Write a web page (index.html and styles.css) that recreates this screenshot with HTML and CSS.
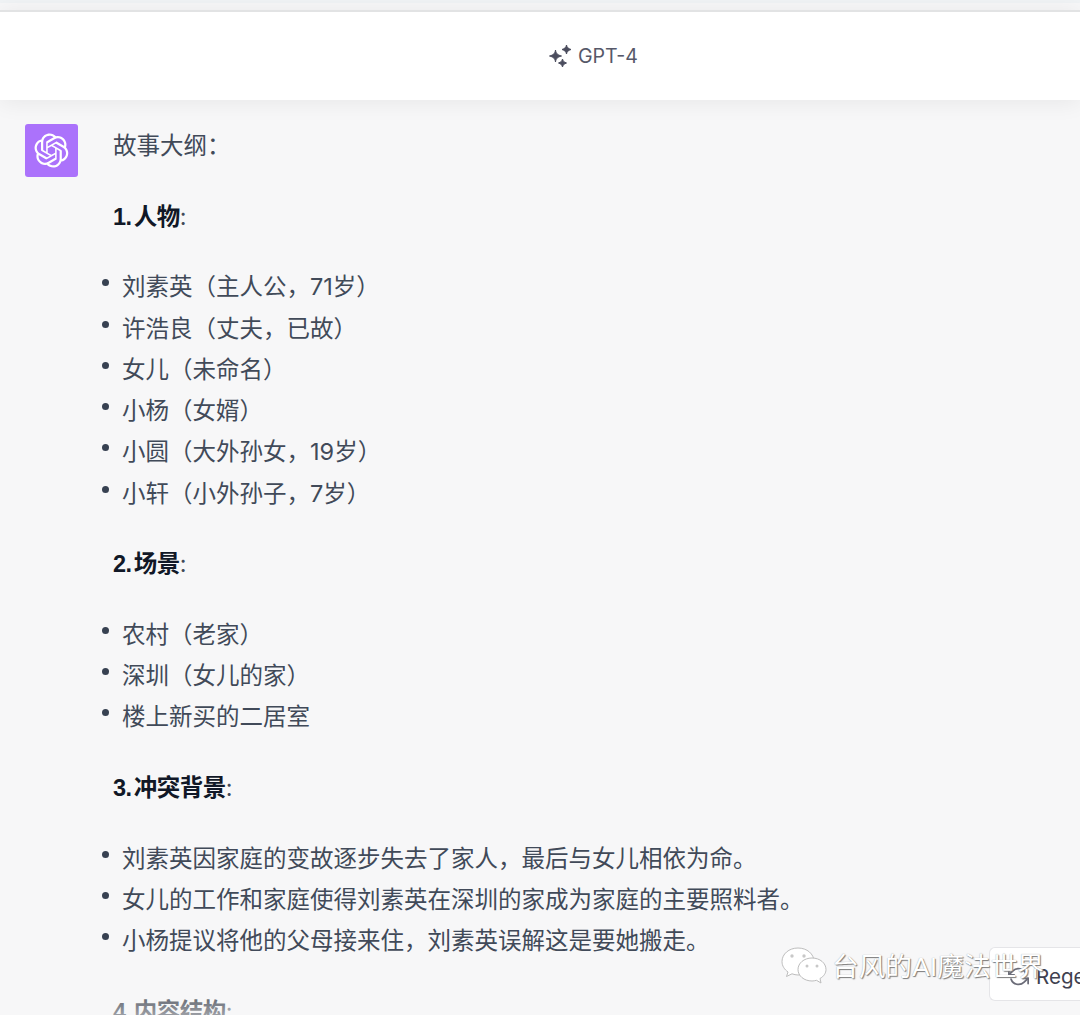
FILE: index.html
```html
<!DOCTYPE html>
<html lang="zh-CN">
<head>
<meta charset="utf-8">
<title>GPT-4</title>
<link rel="stylesheet" href="styles.css">
</head>
<body>
<div class="strip"></div>
<header class="header">
  <svg class="sparkle" viewBox="0 0 24 24" aria-hidden="true">
    <path d="M6.500 6 C7 9.500 8.500 11 12.500 12 C8.500 13 7 14.500 6.500 18 C6 14.500 4.500 13 0.500 12 C4.500 11 6 9.500 6.500 6 Z" stroke="#4b4d5e" stroke-width="1" stroke-linejoin="round"/>
    <path d="M17.500 1 C18 3.400 19 4.500 22 5.500 C19 6.500 18 7.600 17.500 10 C17 7.600 16 6.500 13 5.500 C16 4.500 17 3.400 17.500 1 Z" stroke="#4b4d5e" stroke-width="1" stroke-linejoin="round"/>
    <path d="M13.500 15 C14 17 14.800 18 17.500 19 C14.800 20 14 21 13.500 23 C13 21 12.200 20 9.500 19 C12.200 18 13 17 13.500 15 Z" stroke="#4b4d5e" stroke-width="1" stroke-linejoin="round"/>
  </svg>
  <span>GPT-4</span>
</header>
<main class="message">
  <div class="avatar">
    <svg viewBox="0 0 41 41" aria-hidden="true"><path d="M37.5324 16.8707C37.9808 15.5241 38.1363 14.0974 37.9886 12.6859C37.8409 11.2744 37.3934 9.91076 36.676 8.68622C35.6126 6.83404 33.9882 5.3676 32.0373 4.4985C30.0864 3.62941 27.9098 3.40259 25.8215 3.85078C24.8796 2.7893 23.7219 1.94125 22.4257 1.36341C21.1295 0.785575 19.7249 0.491269 18.3058 0.500197C16.1708 0.495044 14.0893 1.16803 12.3614 2.42214C10.6335 3.67624 9.34853 5.44666 8.6917 7.47815C7.30085 7.76286 5.98686 8.3414 4.8377 9.17505C3.68854 10.0087 2.73073 11.0782 2.02839 12.312C0.956464 14.1591 0.498905 16.2988 0.721698 18.4228C0.944492 20.5467 1.83612 22.5449 3.268 24.1293C2.81966 25.4759 2.66413 26.9026 2.81182 28.3141C2.95951 29.7256 3.40701 31.0892 4.12437 32.3138C5.18791 34.1659 6.8123 35.6322 8.76321 36.5013C10.7141 37.3704 12.8907 37.5973 14.9789 37.1492C15.9208 38.2107 17.0786 39.0587 18.3747 39.6366C19.6709 40.2144 21.0755 40.5087 22.4946 40.4998C24.6307 40.5054 26.7133 39.8321 28.4418 38.5772C30.1704 37.3223 31.4556 35.5506 32.1119 33.5179C33.5027 33.2332 34.8167 32.6547 35.9659 31.821C37.115 30.9874 38.0728 29.9178 38.7752 28.684C39.8458 26.8371 40.3023 24.6979 40.0789 22.5748C39.8556 20.4517 38.9639 18.4544 37.5324 16.8707ZM22.4978 37.8849C20.7443 37.8874 19.0459 37.2733 17.6994 36.1501C17.7601 36.117 17.8666 36.0586 17.936 36.0161L25.9004 31.4156C26.1003 31.3019 26.2663 31.137 26.3813 30.9378C26.4964 30.7386 26.5563 30.5124 26.5549 30.2825V19.0542L29.9213 20.998C29.9389 21.0068 29.9541 21.0198 29.9656 21.0359C29.977 21.052 29.9842 21.0707 29.9867 21.0902V30.3889C29.9842 32.375 29.1946 34.2791 27.7909 35.6841C26.3872 37.0892 24.4838 37.8806 22.4978 37.8849ZM6.39227 31.0064C5.51397 29.4888 5.19742 27.7107 5.49804 25.9832C5.55718 26.0187 5.66048 26.0818 5.73461 26.1244L13.699 30.7248C13.8975 30.8408 14.1233 30.902 14.3532 30.902C14.583 30.902 14.8088 30.8408 15.0073 30.7248L24.731 25.1103V28.9979C24.7321 29.0177 24.7283 29.0376 24.7199 29.0556C24.7115 29.0736 24.6988 29.0893 24.6829 29.1012L16.6317 33.7497C14.9096 34.7416 12.8643 35.0097 10.9447 34.4954C9.02506 33.9811 7.38785 32.7263 6.39227 31.0064ZM4.29707 13.6194C5.17156 12.0998 6.55279 10.9364 8.19885 10.3327C8.19885 10.4013 8.19491 10.5228 8.19491 10.6071V19.808C8.19351 20.0378 8.25334 20.2638 8.36823 20.4629C8.48312 20.6619 8.64893 20.8267 8.84863 20.9404L18.5723 26.5542L15.206 28.4979C15.1894 28.5089 15.1703 28.5155 15.1505 28.5173C15.1307 28.5191 15.1107 28.516 15.0924 28.5082L7.04046 23.8557C5.32135 22.8601 4.06716 21.2235 3.55289 19.3046C3.03862 17.3858 3.30624 15.3413 4.29707 13.6194ZM31.955 20.0556L22.2312 14.4411L25.5976 12.4981C25.6142 12.4872 25.6333 12.4805 25.6531 12.4787C25.6729 12.4769 25.6928 12.4801 25.7111 12.4879L33.7631 17.1364C34.9967 17.849 36.0017 18.8982 36.6606 20.1613C37.3194 21.4244 37.6047 22.849 37.4832 24.2684C37.3617 25.6878 36.8382 27.0432 35.9743 28.1759C35.1103 29.3086 33.9415 30.1717 32.6047 30.6641C32.6047 30.5947 32.6047 30.4733 32.6047 30.3889V21.188C32.6066 20.9586 32.5474 20.7328 32.4332 20.5338C32.319 20.3348 32.154 20.1698 31.955 20.0556ZM35.3055 15.0128C35.2464 14.9765 35.1431 14.9142 35.069 14.8717L27.1045 10.2712C26.906 10.1554 26.6803 10.0943 26.4504 10.0943C26.2206 10.0943 25.9948 10.1554 25.7963 10.2712L16.0726 15.8858V11.9982C16.0715 11.9783 16.0753 11.9585 16.0837 11.9405C16.0921 11.9225 16.1048 11.9068 16.1207 11.8949L24.1719 7.25025C25.4053 6.53903 26.8158 6.19376 28.2383 6.25482C29.6608 6.31589 31.0364 6.78077 32.2044 7.59508C33.3723 8.40939 34.2842 9.53945 34.8334 10.8531C35.3826 12.1667 35.5464 13.6095 35.3055 15.0128ZM14.2424 21.9419L10.8752 19.9981C10.8576 19.9893 10.8423 19.9763 10.8309 19.9602C10.8195 19.9441 10.8122 19.9254 10.8098 19.9058V10.6071C10.8107 9.18295 11.2173 7.78848 11.9819 6.58696C12.7466 5.38544 13.8377 4.42659 15.1275 3.82264C16.4173 3.21869 17.8524 2.99464 19.2649 3.1767C20.6775 3.35876 22.0089 3.93941 23.1034 4.85067C23.0427 4.88379 22.937 4.94215 22.8668 4.98473L14.9024 9.58517C14.7025 9.69878 14.5366 9.86356 14.4215 10.0626C14.3065 10.2616 14.2466 10.4877 14.2479 10.7175L14.2424 21.9419ZM16.071 17.9991L20.4018 15.4978L24.7325 17.9975V22.9985L20.4018 25.4983L16.071 22.9985V17.9991Z"/></svg>
  </div>
  <div class="content">
    <p>故事大纲：</p>
    <p><strong>1. 人物</strong>:</p>
    <ul>
      <li>刘素英（主人公，71岁）</li>
      <li>许浩良（丈夫，已故）</li>
      <li>女儿（未命名）</li>
      <li>小杨（女婿）</li>
      <li>小圆（大外孙女，19岁）</li>
      <li>小轩（小外孙子，7岁）</li>
    </ul>
    <p><strong>2. 场景</strong>:</p>
    <ul>
      <li>农村（老家）</li>
      <li>深圳（女儿的家）</li>
      <li>楼上新买的二居室</li>
    </ul>
    <p><strong>3. 冲突背景</strong>:</p>
    <ul>
      <li>刘素英因家庭的变故逐步失去了家人，最后与女儿相依为命。</li>
      <li>女儿的工作和家庭使得刘素英在深圳的家成为家庭的主要照料者。</li>
      <li>小杨提议将他的父母接来住，刘素英误解这是要她搬走。</li>
    </ul>
    <p><strong>4. 内容结构</strong>:</p>
  </div>
</main>
<div class="fade"></div>
<button class="regen" type="button">
  <svg viewBox="0 0 24 24" aria-hidden="true"><path d="M1 4v6h6M23 20v-6h-6"/><path d="M20.500 9A9 9 0 0 0 5.600 5.600L1 10m22 4-4.600 4.400A9 9 0 0 1 3.500 15"/></svg>
  <span>Regenerate</span>
</button>
<div class="watermark">
  <svg viewBox="0 0 46 40" aria-hidden="true">
    <path class="bubble" d="M17 2C8 2 1 8 1 15.500C1 20 3.500 23.500 7 26L5.500 30.500L11 27.800C13 28.500 15 29 17 29C26 29 33 23 33 15.500C33 8 26 2 17 2Z"/>
    <circle class="eye" cx="11" cy="10" r="1.700"/>
    <circle class="eye" cx="23" cy="10" r="1.700"/>
    <path class="bubble" d="M31 12C23 12 17 17.200 17 23.500C17 29.800 23 35 31 35C32.500 35 34 34.700 35.500 34.300L40 37L39 32.500C42.700 30.500 45 27.200 45 23.500C45 17.200 39 12 31 12Z"/>
    <circle class="eye" cx="26" cy="20" r="1.500"/>
    <circle class="eye" cx="36" cy="20" r="1.500"/>
  </svg>
  <span class="mark-text">台风的AI魔法世界</span>
</div>
</body>
</html>
```
FILE: styles.css
```css
* { box-sizing: border-box; }
html, body { margin: 0; height: 100%; }
body {
  height: 1015px;
  overflow: hidden;
  position: relative;
  background: #f7f7f8;
  font-family: Inter, "Noto Sans CJK SC", sans-serif;
  color: #414a59;
}
.strip {
  height: 3px;
  background: #f0f3f5;
}
.header {
  position: relative;
  z-index: 2;
  height: 90px;
  margin-top: 7px;
  background: #fff;
  border-top: 2px solid #e2e3e4;
  box-shadow: 0 2px 22px rgba(0, 0, 0, 0.07);
  display: flex;
  align-items: center;
  justify-content: center;
  gap: 5px;
  padding: 0 0 0 107px;
  font-size: 19.600px;
  color: #565869;
}
.sparkle { width: 24px; height: 24px; fill: #4b4d5e; }
.message {
  display: flex;
  padding: 24px 0 0 25px;
}
.avatar {
  flex: none;
  width: 53px;
  height: 53px;
  background: #ab72fb;
  border-radius: 3px;
  display: flex;
  align-items: center;
  justify-content: center;
}
.avatar svg { width: 35px; height: 35px; fill: #fff; }
.content {
  margin-left: 35px;
  padding-top: 1px;
  font-size: 23.500px;
  line-height: 41.250px;
}
.content p { margin: 0 0 29.400px; white-space: nowrap; }
.content strong {
  font-family: "Liberation Sans", "Noto Sans CJK SC", sans-serif;
  font-weight: 700;
  line-height: 1;
  color: #111827;
  word-spacing: -4px;
  letter-spacing: -0.500px;
}
.content ul { margin: 0 0 29.400px -11px; padding: 0; list-style: none; }
.content li { display: flex; gap: 13px; white-space: nowrap; }
.content li::before {
  content: "";
  flex: none;
  width: 7px;
  height: 7px;
  margin-top: 13px;
  border-radius: 50%;
  background: #374151;
}
.fade {
  position: absolute;
  left: 0;
  right: 0;
  bottom: 0;
  height: 45px;
  background: linear-gradient(to bottom, rgba(247, 247, 248, 0), rgba(247, 247, 248, 0.6));
}
.regen {
  position: absolute;
  left: 989px;
  top: 947px;
  width: 91px;
  height: 54px;
  overflow: hidden;
  background: #fff;
  border: 1px solid #e5e5e8;
  border-right: 0;
  border-radius: 6px 0 0 6px;
  display: flex;
  align-items: center;
  gap: 7px;
  padding: 4px 0 0 18px;
  font: 20.600px Inter, sans-serif;
  color: #40414f;
}
.regen svg { flex: none; width: 21px; height: 21px; fill: none; stroke: #6b6c78; stroke-width: 2; stroke-linecap: round; stroke-linejoin: round; }
.regen span { white-space: nowrap; }
.watermark {
  position: absolute;
  left: 781px;
  top: 944px;
  display: flex;
  align-items: center;
  gap: 5px;
  font-family: "Liberation Sans", "Noto Sans CJK SC", sans-serif;
  font-size: 26.700px;
  line-height: 40px;
  color: #fff;
  text-shadow: 1px 1px 1px #7c7c7c, 0 0 1px #9a9a9a;
  white-space: nowrap;
}
.mark-text { padding-top: 3px; }
.watermark svg { width: 46px; height: 40px; }
.bubble { fill: #fff; stroke: #bdbdbd; stroke-width: 1; }
.eye { fill: #c8c8c8; }
```
